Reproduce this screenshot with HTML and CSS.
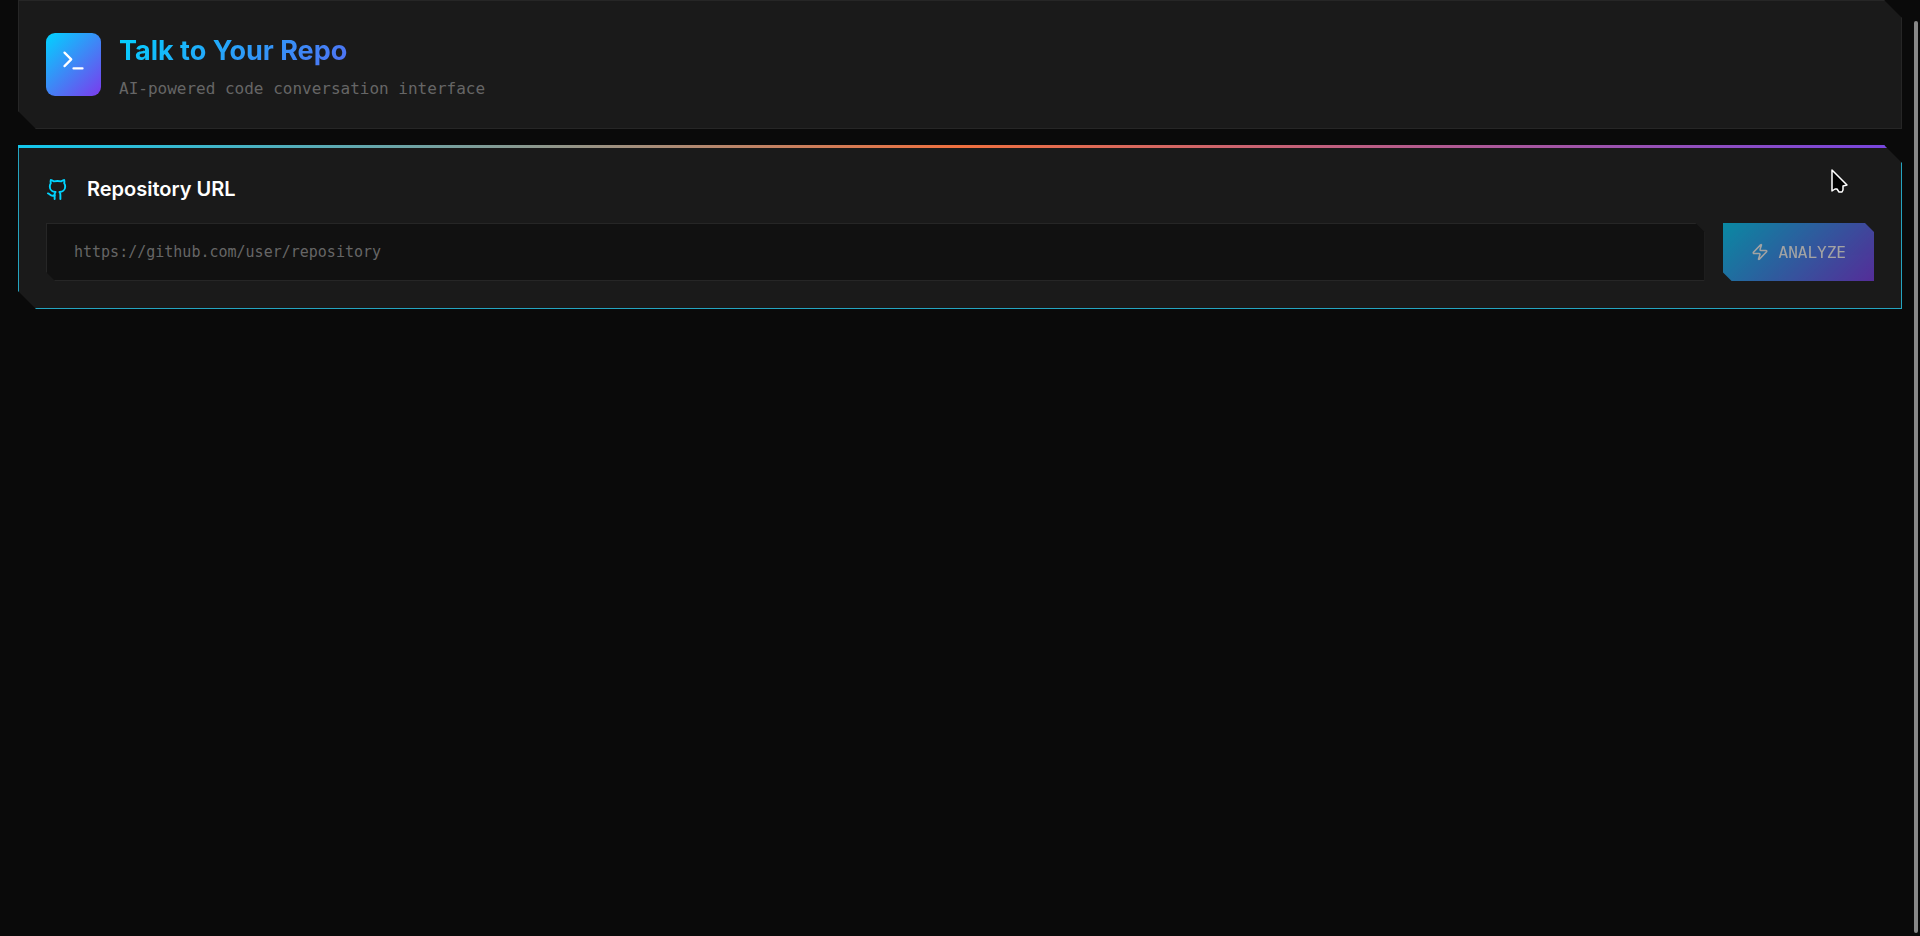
FILE: index.html
```html
<!DOCTYPE html>
<html lang="en">
<head>
    <meta charset="UTF-8">
    <meta name="viewport" content="width=device-width, initial-scale=1.0">
    <title>Talk to Your Repo</title>
    <link rel="stylesheet" href="styles.css">
</head>
<body>
    <div class="app">
        <header class="card header">
            <div class="logo">
                <svg viewBox="0 0 24 24" aria-hidden="true">
                    <polyline points="4 17 10 11 4 5"/>
                    <line x1="12" y1="19" x2="20" y2="19"/>
                </svg>
            </div>
            <div class="brand">
                <h1>Talk to Your Repo</h1>
                <p>AI-powered code conversation interface</p>
            </div>
        </header>

        <form class="card repo">
            <label class="repo-label" for="repo-url">
                <svg viewBox="0 0 24 24" aria-hidden="true">
                    <path d="M15 22v-4a4.8 4.8 0 0 0-1-3.500c3 0 6-2 6-5.500.08-1.250-.27-2.480-1-3.500.28-1.150.28-2.350 0-3.500 0 0-1 0-3 1.500-2.640-.5-5.360-.5-8 0C6 2 5 2 5 2c-.3 1.150-.3 2.350 0 3.500A5.403 5.403 0 0 0 4 9c0 3.500 3 5.500 6 5.500-.39.49-.68 1.050-.85 1.650-.17.6-.22 1.230-.15 1.850v4"/>
                    <path d="M9 18c-4.510 2-5-2-7-2"/>
                </svg>
                Repository URL
            </label>
            <div class="repo-row">
                <input type="text" id="repo-url" placeholder="https://github.com/user/repository">
                <button type="submit" disabled>
                    <svg viewBox="0 0 24 24" aria-hidden="true">
                        <path d="M4 14a1 1 0 0 1-.78-1.630l9.900-10.200a.5.5 0 0 1 .86.46l-1.920 6.020A1 1 0 0 0 13 10h7a1 1 0 0 1 .78 1.630l-9.900 10.200a.5.5 0 0 1-.86-.46l1.920-6.020A1 1 0 0 0 11 14z"/>
                    </svg>
                    ANALYZE
                </button>
            </div>
        </form>
    </div>

    <div class="scroll-thumb"></div>
    <svg class="cursor" viewBox="0 0 18 26" aria-hidden="true">
        <path d="M2 2v21l3-2h2l2 3h3l1-2v-4l4-1z"/>
    </svg>
</body>
</html>
```

FILE: styles.css
```css
* {
    box-sizing: border-box;
    margin: 0;
    padding: 0;
}
body {
    min-height: 100vh;
    background: #0a0a0a;
    color: #fff;
    font-family: Inter, sans-serif;
}
svg {
    display: block;
    fill: none;
    stroke: currentColor;
    stroke-width: 2;
    stroke-linecap: round;
    stroke-linejoin: round;
}
.app {
    display: flex;
    flex-direction: column;
    gap: 16px;
    padding: 0 18px;
}
.card {
    background: #1a1a1a;
    border: 1px solid #262626;
    padding: 27px;
    clip-path: polygon(0 0, calc(100% - 18px) 0, 100% 18px, 100% 100%, 18px 100%, 0 calc(100% - 18px));
}
.header {
    display: flex;
    align-items: center;
    gap: 18px;
}
.logo {
    padding: 14px 14px 22px;
    border-radius: 9px;
    background: linear-gradient(135deg, #00d4ff, #7c3aed);
}
.logo svg {
    width: 27px;
    height: 27px;
}
.brand h1 {
    margin-bottom: 4px;
    font-size: 27px;
    line-height: 45px;
    font-weight: 700;
    background: linear-gradient(135deg, #00d4ff, #7c3aed);
    -webkit-background-clip: text;
    background-clip: text;
    color: transparent;
}
.brand p {
    font-family: "DejaVu Sans Mono", monospace;
    font-size: 16px;
    line-height: 24px;
    color: #666;
}
.repo {
    position: relative;
    border-color: #24a4c0;
}
/* gradient accent along the top edge */
.repo::before {
    content: "";
    position: absolute;
    top: -1px;
    left: -1px;
    right: -1px;
    height: 3px;
    background: linear-gradient(90deg, #12c8ee, #f0703f, #7645e0);
}
.repo-label {
    display: flex;
    align-items: center;
    gap: 18px;
    margin-bottom: 18px;
    font-size: 20px;
    line-height: 32px;
    font-weight: 600;
}
.repo-label svg {
    width: 23px;
    height: 23px;
    color: #00d4ff;
}
.repo-row {
    display: flex;
    gap: 18px;
}
.repo-row input,
.repo-row button {
    height: 58px;
    font-family: "DejaVu Sans Mono", monospace;
    clip-path: polygon(0 0, calc(100% - 9px) 0, 100% 9px, 100% 100%, 9px 100%, 0 calc(100% - 9px));
}
.repo-row input {
    flex: 1;
    min-width: 0;
    padding: 0 27px;
    border: 1px solid #262626;
    background: #111;
    color: #fff;
    font-size: 15px;
    outline: none;
}
.repo-row input::placeholder {
    color: #666;
}
.repo-row button {
    display: flex;
    align-items: center;
    gap: 10px;
    padding: 0 28px;
    border: none;
    background: linear-gradient(135deg, #00d4ff, #7c3aed);
    color: #fff;
    font-size: 16px;
    cursor: pointer;
}
.repo-row button:disabled {
    opacity: 0.6;
    cursor: not-allowed;
}
.repo-row button svg {
    width: 18px;
    height: 18px;
}
.scroll-thumb {
    position: fixed;
    top: 21px;
    right: 2px;
    bottom: 3px;
    width: 4px;
    border-radius: 2px;
    background: #888;
}
.cursor {
    position: fixed;
    top: 168px;
    right: 72px;
    width: 18px;
    height: 26px;
    fill: #000;
    stroke: #fff;
    stroke-width: 1.5;
}
```
